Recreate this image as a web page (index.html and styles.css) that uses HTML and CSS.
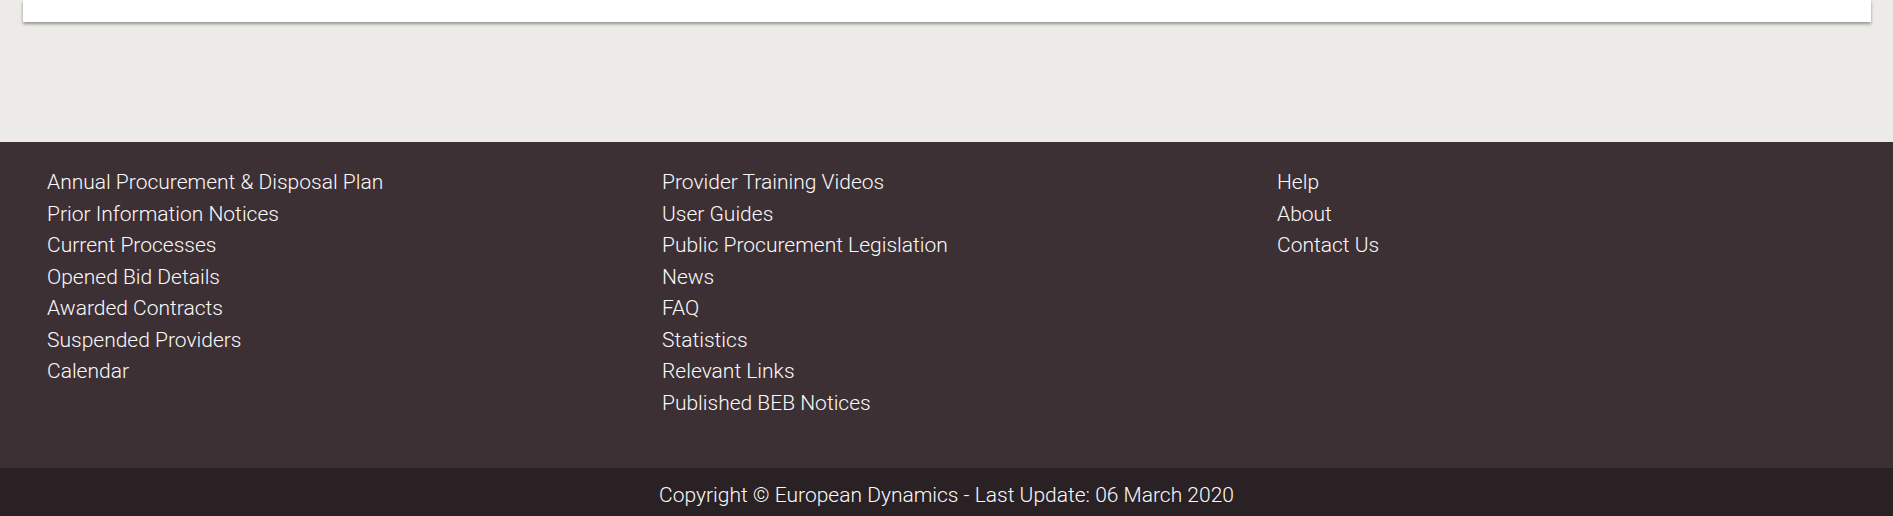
FILE: index.html
```html
<!DOCTYPE html>
<html lang="en">
<head>
<meta charset="utf-8">
<title>Footer</title>
<link rel="stylesheet" href="styles.css">
</head>
<body>
<div class="page">
  <div class="card"></div>
</div>
<footer class="footer">
  <div class="footer-cols">
    <ul class="col">
      <li><a href="#">Annual Procurement &amp; Disposal Plan</a></li>
      <li><a href="#">Prior Information Notices</a></li>
      <li><a href="#">Current Processes</a></li>
      <li><a href="#">Opened Bid Details</a></li>
      <li><a href="#">Awarded Contracts</a></li>
      <li><a href="#">Suspended Providers</a></li>
      <li><a href="#">Calendar</a></li>
    </ul>
    <ul class="col">
      <li><a href="#">Provider Training Videos</a></li>
      <li><a href="#">User Guides</a></li>
      <li><a href="#">Public Procurement Legislation</a></li>
      <li><a href="#">News</a></li>
      <li><a href="#">FAQ</a></li>
      <li><a href="#">Statistics</a></li>
      <li><a href="#">Relevant Links</a></li>
      <li><a href="#">Published BEB Notices</a></li>
    </ul>
    <ul class="col">
      <li><a href="#">Help</a></li>
      <li><a href="#">About</a></li>
      <li><a href="#">Contact Us</a></li>
    </ul>
  </div>
</footer>
<div class="copyright">Copyright © European Dynamics - Last Update: 06 March 2020</div>
</body>
</html>
```

FILE: styles.css
```css
html, body {
  margin: 0;
  padding: 0;
  overflow: hidden;
}
body {
  background: #edebe7;
  font-family: Roboto, "Liberation Sans", sans-serif;
  height: 516px;
}
.page {
  padding: 0 22px 0 23px;
  height: 142px;
}
.card {
  height: 22px;
  background: #ffffff;
  box-shadow: 0 2px 3px rgba(0, 0, 0, 0.38);
}
.footer {
  background: #3d3035;
  padding: 25px 0 0 47px;
  height: 301px;
}
.footer-cols {
  display: grid;
  grid-template-columns: 615px 615px 615px;
}
.col {
  list-style: none;
  margin: 0;
  padding: 0;
}
.col li {
  font-size: 21px;
  font-weight: 300;
  line-height: 31.5px;
}
.col a {
  color: #fafafa;
  text-decoration: none;
}
.copyright {
  background: #2a2125;
  color: #fafafa;
  font-size: 21px;
  font-weight: 300;
  line-height: 24px;
  text-align: center;
  padding: 15px 0 9px 0;
}
```
